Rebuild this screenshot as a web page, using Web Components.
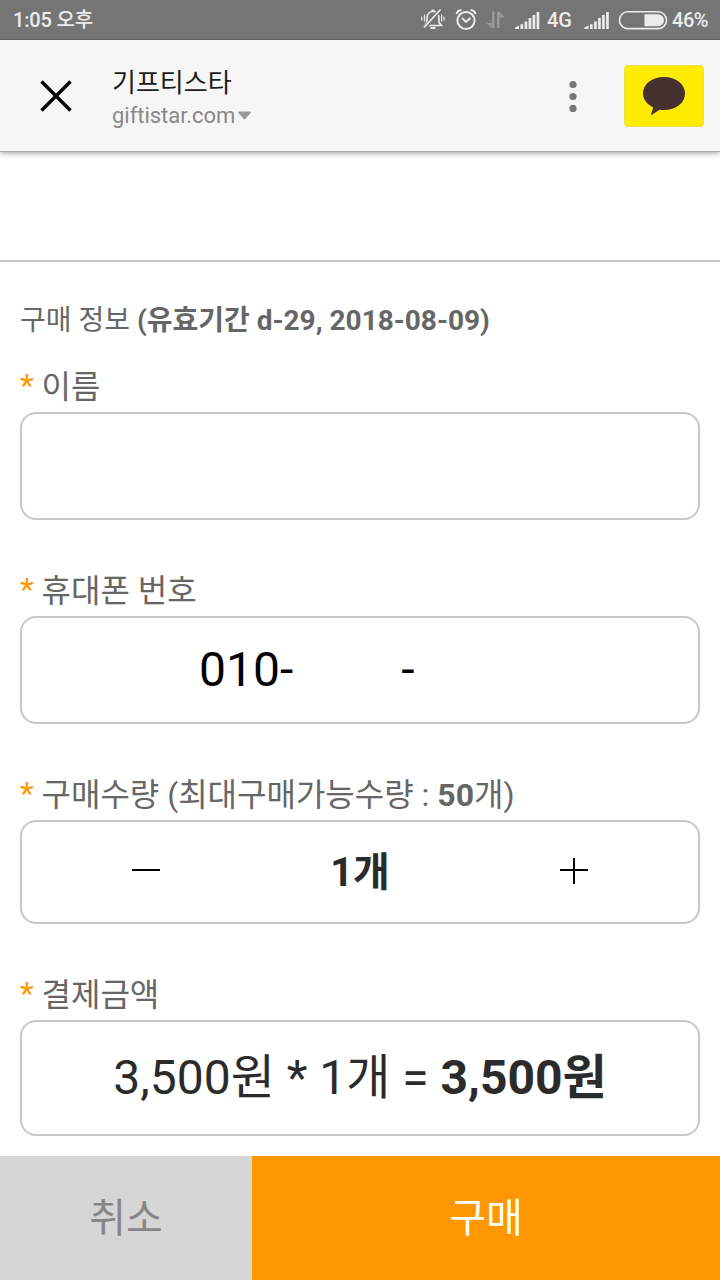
<!DOCTYPE html>
<html lang="ko">
<head>
<meta charset="utf-8">
<title>기프티스타</title>
<style>
html,body{margin:0;height:100%;background:#fff}
body{font-family:Roboto,"Noto Sans CJK KR",sans-serif;overflow:hidden}
</style>
</head>
<body>
<purchase-page></purchase-page>
<script>
const define = (name, html) => customElements.define(name, class extends HTMLElement {
  constructor() {
    super();
    const t = document.createElement('template');
    t.innerHTML = html;
    this.attachShadow({mode: 'open'}).append(t.content.cloneNode(true));
  }
});

define('status-bar', `
<style>
:host{display:flex;box-sizing:border-box;height:40px;padding:0 12px 0 13px;background:#757575;border-bottom:1px solid #636363;color:#ececec;font-size:20px;font-weight:500;line-height:40px;justify-content:space-between}
svg{display:block;flex:none}
.time{letter-spacing:-.15px}
.icons{display:flex;width:288px;align-items:center}
.battery{margin-left:auto}
.percent{letter-spacing:-.5px}
</style>
<span class="time">1:05 오후</span>
<div class="icons">
<svg width="127" height="40" viewBox="420 0 127 40" fill="none" stroke="#ececec" stroke-width="1.7">
<path d="M425 25.500L427 22.500V18C427 14 429.500 11.500 433 11.500S439 14 439 18V22.500L441.500 25.500Z"/>
<path d="M431.500 10.500h3M430.500 28h5" stroke-width="2"/>
<path d="M424.500 28L440.500 9.500" stroke="#757575" stroke-width="4"/>
<path d="M424 27.500L440.500 9.500"/>
<path d="M424.500 14.500v7M421.800 16.500v4M441.600 14.500v7M444 16.500v4" stroke-width="1.2"/>
<circle cx="466" cy="20.500" r="8.600" stroke-width="2"/>
<path d="M462 18L466 22L470.500 18M456.500 14C457.200 11.500 459 10.200 461.500 10M475.500 14C474.800 11.500 473 10.200 470.500 10" stroke-width="2"/>
<path d="M494.500 28V11.500h-2.500v11.500H486.500L492 28ZM497 11.500V28h2.500V17.500h5.300L499.500 11.500Z" fill="#999" stroke="none"/>
<g fill="#ececec" stroke="none"><path d="M515 29v-1.500l4-2V29ZM520.500 24.200h2.700V29h-2.700ZM524.600 21.500h2.700V29h-2.700ZM528.600 18h2.700v11h-2.700ZM532.600 15h2.700v14h-2.700ZM536.600 12h2.700v17h-2.700Z"/></g>
</svg>
<span>4G</span>
<svg class="battery" width="88" height="40" viewBox="583.500 0 88 40" fill="#ececec">
<path d="M584 29v-1.500l4-2V29ZM589.500 24.200h2.700V29h-2.700ZM593.600 21.500h2.700V29h-2.700ZM597.600 18h2.700v11h-2.700ZM601.600 15h2.700v14h-2.700ZM605.600 12h2.700v17h-2.700Z"/>
<rect x="619" y="11.800" width="47" height="16.800" rx="8.400" fill="none" stroke="#ececec" stroke-width="1.600"/>
<path d="M644 14.200H657.500a6 6 0 0 1 0 12H644Z"/>
</svg>
<span class="percent">46%</span>
</div>`);

define('browser-bar', `
<style>
:host{display:flex;box-sizing:border-box;height:112px;background:#f6f6f6;border-bottom:1px solid #aaa;box-shadow:0 2px 5px #0000004d;align-items:center;padding:0 16px 0 40px;position:relative}
svg{display:block;flex:none}
.site{margin-left:40px;flex:1;padding-top:5px}
.title{font-size:26px;line-height:34px;color:#1d1d1d}
.url{display:flex;align-items:center;font-size:22px;line-height:31px;color:#888;gap:3px;letter-spacing:-.03px}
.talk{margin-left:47.500px;display:grid;place-items:center;box-sizing:border-box;width:80px;height:62px;border-radius:4px;background:#ffeb00;border:1px solid #eee04a}
</style>
<svg width="32" height="32" viewBox="0 0 32 32" stroke="#000" stroke-width="3.400"><path d="M1.500 1.500L30.500 30.500M30.500 1.500L1.500 30.500"/></svg>
<div class="site"><div class="title"><slot name="title"></slot></div>
<div class="url"><slot name="url"></slot><svg width="13" height="9" viewBox="0 0 13 9"><path d="M1.500 .5h10c1.300 0 1.600 1 .9 1.800L7.500 7.800q-1 1-2 0L.6 2.300C-.1 1.500.2.500 1.500.500Z" fill="#999"/></svg></div></div>
<svg width="8" height="32" viewBox="0 0 8 32" fill="#777"><circle cx="4" cy="4.500" r="3.600"/><circle cx="4" cy="16.500" r="3.600"/><circle cx="4" cy="28.400" r="3.600"/></svg>
<div class="talk"><svg width="44" height="40" viewBox="0 0 44 40"><path d="M22 1C10 1 1 8 1 17.500C1 23.500 5 28.500 11.200 31.400L8.800 39.500L17.500 33.700Q19.500 34 22 34C34 34 43 27 43 17.500S34 1 22 1Z" fill="#463030"/></svg></div>`);

define('form-field', `
<style>
:host{display:block;margin-bottom:46px}
.label{display:flex;height:50px;line-height:50px;font-size:32px;color:#666;white-space:pre}
.label i{font-style:normal;color:#ff9800;width:21.500px;line-height:47px}
.box{display:flex;box-sizing:border-box;height:var(--box-height,108px);border:2px solid #c8c8c8;border-radius:16px;align-items:center;justify-content:center}
</style>
<div class="label"><i>*</i><span><slot name="label"></slot></span></div>
<div class="box"><slot></slot></div>`);

define('phone-value', `
<style>
:host{display:flex;width:100%;font-size:48px;line-height:60px;color:#000;padding-left:177px;gap:108px}
</style>
<span>010-</span><span>-</span>`);

define('quantity-stepper', `
<style>
:host{display:flex;align-items:center;justify-content:space-between;width:456px;font-size:40px;line-height:50px;font-weight:700;color:#2b2b2b}
svg{display:block}
span{padding-top:2px}
</style>
<svg width="28" height="28" viewBox="0 0 28 28"><path d="M0 12h28" stroke="#000" stroke-width="2"/></svg>
<span><slot></slot></span>
<svg width="28" height="28" viewBox="0 0 28 28"><path d="M0 12h28M14 -2v28" stroke="#000" stroke-width="2"/></svg>`);

define('price-total', `
<style>:host{display:block;font-size:48px;line-height:60px;color:#2b2b2b;white-space:nowrap}</style>
<slot></slot>`);

define('action-bar', `
<style>
:host{display:grid;grid-template-columns:252px 1fr;height:124px;font-size:40px;line-height:124px;text-align:center}
div{box-sizing:border-box;height:124px;padding-top:2px;overflow:hidden;line-height:122px}
.cancel{background:#d5d5d5;color:#858585}
.buy{background:#ff9800;color:#fff}
</style>
<div class="cancel"><slot name="cancel"></slot></div><div class="buy"><slot name="buy"></slot></div>`);

define('purchase-page', `
<style>
:host{display:flex;flex-direction:column;width:720px;height:1280px;background:#fff}
.spacer{height:108px;border-bottom:2px solid #c8c8c8}
main{flex:1;min-height:0;overflow:hidden;padding:34px 20px 0}
.info{font-size:28px;line-height:50px;height:50px;margin-bottom:16px;color:#666;white-space:pre}
browser-bar,status-bar,.spacer,action-bar{flex:none}
b{font-weight:700}
</style>
<status-bar></status-bar>
<browser-bar><span slot="title">기프티스타</span><span slot="url">giftistar.com</span></browser-bar>
<div class="spacer"></div>
<main>
<div class="info">구매 정보 <b>(유효기간 d-29, 2018-08-09)</b></div>
<form-field><span slot="label">이름</span></form-field>
<form-field><span slot="label">휴대폰 번호</span><phone-value></phone-value></form-field>
<form-field style="--box-height:104px"><span slot="label">구매수량 (최대구매가능수량 : <b>50</b>개)</span><quantity-stepper>1개</quantity-stepper></form-field>
<form-field style="--box-height:116px"><span slot="label">결제금액</span><price-total>3,500원 * 1개 = <b>3,500원</b></price-total></form-field>
</main>
<action-bar><span slot="cancel">취소</span><span slot="buy">구매</span></action-bar>`);
</script>
</body>
</html>
